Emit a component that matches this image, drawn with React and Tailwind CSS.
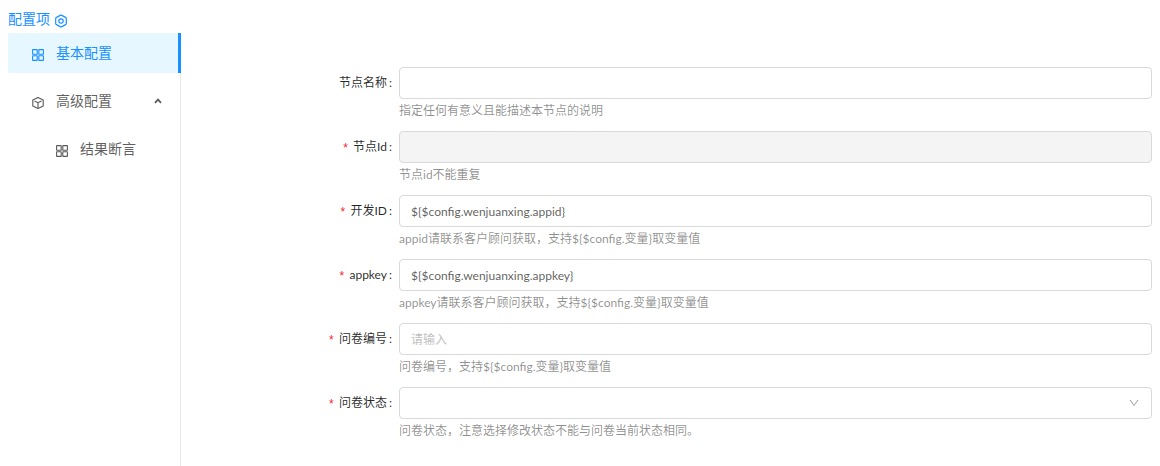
import React, { useState } from "react";
import { AiOutlineDown } from "react-icons/ai";

const fields = [
  { name: "nodeName", label: "节点名称", help: "指定任何有意义且能描述本节点的说明" },
  { name: "nodeId", label: "节点Id", help: "节点id不能重复", required: true, disabled: true },
  {
    name: "appid",
    label: "开发ID",
    help: "appid请联系客户顾问获取，支持${$config.变量}取变量值",
    required: true,
  },
  {
    name: "appkey",
    label: "appkey",
    help: "appkey请联系客户顾问获取，支持${$config.变量}取变量值",
    required: true,
  },
  {
    name: "surveyNo",
    label: "问卷编号",
    help: "问卷编号，支持${$config.变量}取变量值",
    placeholder: "请输入",
    required: true,
  },
  {
    name: "surveyStatus",
    label: "问卷状态",
    help: "问卷状态，注意选择修改状态不能与问卷当前状态相同。",
    type: "select",
    required: true,
  },
];

const SettingIcon = () => (
  <svg viewBox="0 0 14 14" className="size-3.5" fill="none" stroke="currentColor" strokeWidth="1.2" aria-hidden="true">
    <path d="M6.2 1.4q.8-.4 1.6 0l3.7 2q.8.4.8 1.200v4.800q0 .8-.8 1.200l-3.700 2q-.8.4-1.600 0l-3.700-2q-.8-.4-.8-1.200V4.600q0-.8.8-1.200z" />
    <circle cx="7" cy="7" r="2.2" />
  </svg>
);

const AppstoreIcon = () => (
  <svg viewBox="0 0 12 12" className="size-3" fill="none" stroke="currentColor" strokeWidth="1.1" aria-hidden="true">
    <rect x=".6" y=".6" width="4.6" height="4.6" rx=".3" />
    <rect x="6.8" y=".6" width="4.6" height="4.6" rx=".3" />
    <rect x=".6" y="6.8" width="4.6" height="4.6" rx=".3" />
    <rect x="6.8" y="6.8" width="4.6" height="4.6" rx=".3" />
  </svg>
);

const CubeIcon = () => (
  <svg viewBox="0 0 12 12" className="size-3" fill="none" stroke="currentColor" strokeWidth="1.1" aria-hidden="true">
    <path d="M6 .6l5.2 2.5v5.8L6 11.4.8 8.9V3.1z" strokeLinejoin="round" />
    <path d="M2.5 3.9L6 5.7l3.5-1.8M6 5.7v5" />
  </svg>
);

const ArrowUpIcon = () => (
  <svg viewBox="0 0 8 6" className="w-2 h-1.5" fill="none" stroke="currentColor" strokeWidth="1.7" aria-hidden="true">
    <path d="M1 4.8L4 1.6l3 3.2" />
  </svg>
);

const Field = ({ field, value, onChange }) => {
  const { name, label, help, required, disabled, placeholder, type } = field;

  return (
    <div className="flex items-start pb-2">
      <label
        htmlFor={name}
        className="flex w-[218px] shrink-0 items-center justify-end pr-[7px] leading-8 text-black/85"
      >
        {required && (
          <span className="mr-1 pt-1 font-['Liberation_Mono',monospace] leading-7 text-[#f5222d]">*</span>
        )}
        {label}
        <span className="ml-0.5">:</span>
      </label>
      <div className="min-w-0 flex-1">
        {type === "select" ? (
          <div className="relative">
            <select
              id={name}
              name={name}
              value={value}
              onChange={onChange}
              className="block h-8 w-full appearance-none rounded border border-[#d9d9d9] bg-white px-[11px] outline-none focus:border-[#40a9ff]"
            >
              <option value=""></option>
            </select>
            <AiOutlineDown className="pointer-events-none absolute right-3 top-2.5 size-3 text-black/35" />
          </div>
        ) : (
          <input
            type="text"
            id={name}
            name={name}
            value={value}
            onChange={onChange}
            disabled={disabled}
            placeholder={placeholder}
            className="block h-8 w-full rounded border border-[#d9d9d9] bg-white px-[11px] text-black/65 outline-none placeholder:text-[#bfbfbf] focus:border-[#40a9ff] disabled:bg-[#f4f4f4]"
          />
        )}
        <p className="leading-6 text-black/45">{help}</p>
      </div>
    </div>
  );
};

const App = () => {
  const [open, setOpen] = useState(true);
  const [values, setValues] = useState({
    nodeName: "",
    nodeId: "",
    appid: "${$config.wenjuanxing.appid}",
    appkey: "${$config.wenjuanxing.appkey}",
    surveyNo: "",
    surveyStatus: "",
  });

  const handleChange = (e) => {
    const { name, value } = e.target;
    setValues((prev) => ({ ...prev, [name]: value }));
  };

  return (
    <div className="flex min-h-screen flex-col bg-white px-2 pt-2 font-[Lato,'Noto_Sans_CJK_SC',sans-serif] text-xs text-black/65">
      {/* Title */}
      <h1 className="flex h-[25px] items-start gap-1 text-sm leading-[22px] text-[#1890ff]">
        配置项
        <span className="pt-1.5">
          <SettingIcon />
        </span>
      </h1>

      <div className="flex flex-1">
        {/* Menu */}
        <nav className="flex w-[173px] shrink-0 flex-col gap-2 border-r border-[#e8e8e8] text-sm">
          <a
            href="#basic"
            className="-mr-px flex h-10 items-center gap-3 border-r-[3px] border-[#1890ff] bg-[#e6f7ff] pl-6 text-[#1890ff]"
          >
            <span className="pt-1">
              <AppstoreIcon />
            </span>
            基本配置
          </a>
          <button
            type="button"
            aria-expanded={open}
            onClick={() => setOpen(!open)}
            className="flex h-10 items-center gap-3 pl-6 pr-[18px]"
          >
            <span className="pt-1">
              <CubeIcon />
            </span>
            高级配置
            <span className={open ? "ml-auto" : "ml-auto rotate-180"}>
              <ArrowUpIcon />
            </span>
          </button>
          {open && (
            <a href="#assert" className="flex h-10 items-center gap-3 pl-12">
              <span className="pt-1">
                <AppstoreIcon />
              </span>
              结果断言
            </a>
          )}
        </nav>

        {/* Form */}
        <form className="min-w-0 flex-1 pt-[34px]" onSubmit={(e) => e.preventDefault()}>
          {fields.map((field) => (
            <Field
              key={field.name}
              field={field}
              value={values[field.name]}
              onChange={handleChange}
            />
          ))}
        </form>
      </div>
    </div>
  );
};

export default App;
